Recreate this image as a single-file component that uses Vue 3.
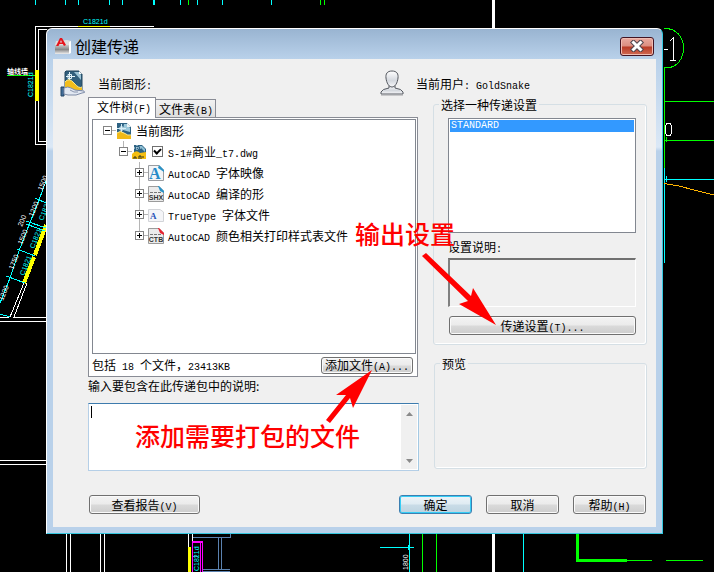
<script setup>
import { h, ref } from 'vue';

// Latin runs are set in a narrower mono face than the Chinese text
const Mixed = ({ t }) => h(
    'span',
    { class: 'mixed' },
    t.split(/([\x20-\x7e]+)/).filter(Boolean).map((run) =>
        /^[\x20-\x7e]/.test(run) ? h('span', { class: 'en' }, run) : run
    )
);
Mixed.props = ['t'];

const included = ref(true);
const note = ref('');
const setup = ref('STANDARD');

const fileTypes = ref([
    { id: 1, kind: 'font', name: 'AutoCAD 字体映像' },
    { id: 2, kind: 'shx', name: 'AutoCAD 编译的形' },
    { id: 3, kind: 'ttf', name: 'TrueType 字体文件' },
    { id: 4, kind: 'ctb', name: 'AutoCAD 颜色相关打印样式表文件' },
]);

const cyanTicks = [35, 65, 78, 109, 122, 153, 154, 180, 197, 222, 271];
const greenTicks = [188, 320, 324];
</script>

<template>
    <div class="desktop">
        <svg class="drawing" viewBox="0 0 714 572" preserveAspectRatio="xMinYMin slice" shape-rendering="crispEdges" aria-hidden="true">
            <rect v-for="x in cyanTicks" :key="x" :x="x" y="0" width="1" height="5" fill="#0ff" />
            <rect v-for="x in greenTicks" :key="x" :x="x" y="0" width="1" height="5" fill="#0f0" />
            <g fill="none" stroke="#fff">
                <path d="M154 26.5H35.5V144.5H46M47 29.5H38.5V141.5H46" />
                <path d="M0 317.5H9M13 317.5H46M0 321.5H46M0 460.5H46M0 464.5H46" />
                <path d="M24 283L10 317M27 283L14 317M35 257L24 283" />
                <path d="M66.5 534V572M70.5 534V572M100.5 534V572M104.5 534V572M188.5 534V547M192.5 534V541" />
                <path d="M493.5 0V28M493.5 534V572" stroke-width="3" />
                <path d="M664 49.5H668M670 41L673.5 38V60M670 60H676" />
                <path d="M667 123.500H670L671.500 126V133L670 135.500H667L665.500 133V126Z" />
            </g>
            <g fill="none" stroke="#ff0">
                <path d="M78 26.5H110" />
                <path d="M37 70V101" stroke-width="4" />
                <path d="M46 225L35 255M34 257L24 283" stroke-width="4" />
                <path d="M189.500 547V572" stroke-width="3" />
            </g>
            <g fill="none" stroke="#0ff">
                <path d="M46 181L39 200L29 225L19 251L10 278L0 303" />
                <path d="M35 198L46 203M26 221L46 228M26 224L45 231M17 249L35 256M6 276L25 283M0 314L10 317" />
                <path d="M664.5 168V263M664 179.500H714M666 176V182M523.5 534V572M409.5 534V572M380 547.500H414" />
                <path d="M409 545V550" stroke-width="2" />
            </g>
            <g fill="none" stroke="#0f0">
                <path d="M7 75.5H35M664.5 67V168M664 101.500H714M664 140.500H714M666 137V142" />
                <path d="M664 28.5C676 28 683.500 37 683.500 48S677 66 670 67.500H664" />
                <path d="M422.5 534V572M436.5 534V572M627 560.500H652M666 560.500H703" />
                <path d="M577.500 534V560.500H627" stroke-width="3" />
            </g>
            <path d="M664 183.500L679 186L694 190L714 195" fill="none" stroke="#ffb400" />
            <path d="M193 537.500H230.500M193 556H198M218.500 537V570M221.500 537V570M202 569.500H230M202 571.500H230M230.500 534V538" fill="none" stroke="#5b82b0" />
            <path d="M192.500 572V541.500H202.500V572M200.500 543V572M192 542.500H203" fill="none" stroke="#f0f" />
            <g class="cad-text" fill="#0ff">
                <text x="83" y="24">C1821d</text>
                <text transform="translate(33 97) rotate(-90)">C1821d</text>
                <text transform="translate(43 221) rotate(-68)">C1821</text>
                <text transform="translate(34 249) rotate(-68)">C1821</text>
                <text transform="translate(24 276) rotate(-68)">C1821</text>
                <text transform="translate(199 571) rotate(-90)">C1821d</text>
            </g>
            <g class="cad-text" fill="#fff">
                <text class="cad-bold" x="7" y="74">轴线墙</text>
                <text transform="translate(42 191) rotate(-68)">1500</text>
                <text transform="translate(33 217) rotate(-68)">1200</text>
                <text transform="translate(22 227) rotate(-68)">200</text>
                <text transform="translate(22 245) rotate(-68)">1500</text>
                <text transform="translate(13 270) rotate(-68)">1750</text>
                <text transform="translate(3 301) rotate(-68)">1200</text>
                <text transform="translate(408 570) rotate(-90)">1800</text>
            </g>
        </svg>

        <section class="dialog" role="dialog" aria-labelledby="dialog-title">
            <header class="titlebar">
                <svg class="app-icon" width="18" height="18" viewBox="0 0 18 18" aria-hidden="true">
                    <defs>
                        <linearGradient id="steel" x1="0" y1="0" x2="0" y2="1">
                            <stop offset="0" stop-color="#c9c9c9" />
                            <stop offset=".5" stop-color="#888" />
                            <stop offset="1" stop-color="#eee" />
                        </linearGradient>
                    </defs>
                    <path d="M2 4L13 3L17 4V16H1V8Z" fill="#ddd" />
                    <rect x="1" y="8" width="14" height="9" fill="url(#steel)" />
                    <path d="M15 5L17 4V16L15 17Z" fill="#fff" />
                    <path d="M2 9L6 1H8L12 8L10 9L8.800 7H5.500L4.500 9ZM6 5.500H8L7 3Z" fill="#e6151c" fill-rule="evenodd" />
                </svg>
                <h1 id="dialog-title">创建传递</h1>
                <button class="close" type="button" aria-label="关闭">
                    <svg width="14" height="12" viewBox="0 0 14 12" aria-hidden="true">
                        <path d="M3.500 2.500L10.500 9.500M10.500 2.500L3.500 9.500" stroke="#50454e" stroke-width="5" stroke-linecap="square" />
                        <path d="M3.500 2.500L10.500 9.500M10.500 2.500L3.500 9.500" stroke="#fff" stroke-width="3" stroke-linecap="square" />
                    </svg>
                </button>
            </header>

            <div class="client">
                <div class="summary">
                    <svg width="26" height="27" viewBox="0 0 26 27" aria-hidden="true">
                        <path d="M6 1H19L22 4V20H5V2Z" fill="#315f7c" stroke="#22475f" />
                        <path d="M14 2H19L21 5V10Z" fill="#9cc4d6" />
                        <path d="M19 1V4H22Z" fill="#fff" />
                        <path d="M9.500 2V11M6 6.500H15M8 4.500H11.500V8.500H8Z" fill="none" stroke="#e4f4fa" />
                        <path d="M5 12Q9 7 14 13T22 17V20H5Z" fill="#f3bd1b" />
                        <path d="M5 12Q9 7 14 13T22 17" fill="none" stroke="#ffec8c" />
                        <path d="M1 17H4V26H1Z" fill="#416d99" stroke="#244766" />
                        <path d="M4 18Q8 16 11 18L15 20L24 21Q26 23 22 23L16 25H8L4 24Z" fill="#e2e8f2" stroke="#7f8ca6" />
                        <path d="M10 20L14 22H18" fill="none" stroke="#8a96af" />
                    </svg>
                    <Mixed t="当前图形:" />
                    <div class="user">
                        <svg width="24" height="27" viewBox="0 0 24 27" aria-hidden="true">
                            <defs>
                                <linearGradient id="skin" x1="0" y1="0" x2="0" y2="1">
                                    <stop offset="0" stop-color="#fff" />
                                    <stop offset=".6" stop-color="#d4d8de" />
                                    <stop offset="1" stop-color="#f8f8fa" />
                                </linearGradient>
                            </defs>
                            <path d="M9 15V18Q2 19 1 22V24H23V22Q22 19 15 18V15" fill="url(#skin)" stroke="#555960" />
                            <path d="M12 1C7 1 5.500 4 6 8C6.500 13 9 17 12 17S17.500 13 18 8C18.500 4 17 1 12 1Z" fill="url(#skin)" stroke="#555960" />
                            <path d="M1 25.500H23" stroke="#c8c8ca" />
                        </svg>
                        <Mixed t="当前用户: GoldSnake" />
                    </div>
                </div>

                <main class="columns">
                    <div class="left">
                        <div class="tabs" role="tablist">
                            <button class="tab active" type="button" role="tab" aria-selected="true"><Mixed t="文件树(F)" /></button>
                            <button class="tab" type="button" role="tab" aria-selected="false"><Mixed t="文件表(B)" /></button>
                        </div>
                        <div class="panel">
                            <div class="tree">
                                <div class="row root">
                                    <button class="toggle open" type="button" aria-label="折叠"></button>
                                    <svg class="node-icon" width="16" height="16" viewBox="0 0 16 16" aria-hidden="true">
                                        <path d="M1 0H11L15 4V16H1Z" fill="#2d6283" />
                                        <path d="M8 1H11L14 5V9L7 7Z" fill="#9cc9db" />
                                        <path d="M11 0V4H15Z" fill="#e9f1f4" />
                                        <path d="M5.500 1V9M1 5.500H10M4 4H7V7H4Z" fill="none" stroke="#d7eef6" />
                                        <path d="M1 10Q4 7 8 10T15 12V16H1Z" fill="#f0b917" />
                                        <path d="M1 10Q4 7 8 10T15 12" fill="none" stroke="#ffec91" />
                                    </svg>
                                    <Mixed t="当前图形" />
                                </div>
                                <div class="row sheet">
                                    <button class="toggle open" type="button" aria-label="折叠"></button>
                                    <svg class="node-icon" width="16" height="16" viewBox="0 0 16 16" aria-hidden="true">
                                        <path d="M2 1H10L14 5V14H2Z" fill="#2d6283" />
                                        <path d="M7 2H10L13 5V8Z" fill="#8cbed3" />
                                        <path d="M2 4H9M5 1V7" stroke="#d7eef6" stroke-dasharray="1 1" />
                                        <path d="M0 10Q4 5 8 9L14 8V15H0Z" fill="#f5bf13" />
                                        <path d="M2 15V13H4V15M7 15V12H9V15M11 14V12" fill="none" stroke="#30311c" />
                                    </svg>
                                    <label class="pick">
                                        <input v-model="included" type="checkbox" />
                                        <Mixed t="S-1#商业_t7.dwg" />
                                    </label>
                                </div>
                                <div v-for="file in fileTypes" :key="file.id" class="row leaf">
                                    <button class="toggle" type="button" aria-label="展开"></button>
                                    <svg class="node-icon" width="16" height="16" viewBox="0 0 16 16" aria-hidden="true">
                                        <template v-if="file.kind === 'font'">
                                            <path d="M.5 .5H11L15.500 5V15.500H.5Z" fill="#f3f5f7" stroke="#9a9da1" />
                                            <path d="M11 0L16 5V7L10 3Z" fill="#2b92c6" />
                                            <text x="1" y="14" class="letter-a">A</text>
                                        </template>
                                        <template v-else-if="file.kind === 'ttf'">
                                            <path d="M.5 2.500H12L15.500 5V14.500H.5Z" fill="#f4f5f8" stroke="#d2d4d8" />
                                            <text x="2" y="12" class="letter-t">A</text>
                                        </template>
                                        <template v-else>
                                            <path d="M.5 .5H11L15.500 5V15.500H.5Z" fill="#ebebeb" stroke="#9b9b9b" />
                                            <path d="M10 0H11L16 5V7L12 5Z" :fill="file.kind === 'shx' ? '#2b92c6' : '#e72330'" />
                                            <path d="M2 6.500H14" stroke="#777" stroke-dasharray="3 1" />
                                            <text x="8" y="14" class="letters" text-anchor="middle">{{ file.kind.toUpperCase() }}</text>
                                        </template>
                                    </svg>
                                    <Mixed :t="file.name" />
                                </div>
                            </div>
                            <div class="panel-foot">
                                <Mixed t="包括 18 个文件，23413KB" />
                                <button class="btn add" type="button"><Mixed t="添加文件(A)..." /></button>
                            </div>
                        </div>
                        <label class="note-label" for="note">输入要包含在此传递包中的说明:</label>
                        <div class="note">
                            <textarea id="note" v-model="note"></textarea>
                            <i class="caret"></i>
                            <div class="scroll">
                                <button type="button" aria-label="向上滚动"><svg width="7" height="4" viewBox="0 0 7 4"><path d="M3.500 0L7 4H0Z" fill="#8a8a8a" /></svg></button>
                                <button type="button" aria-label="向下滚动"><svg width="7" height="4" viewBox="0 0 7 4"><path d="M0 0H7L3.500 4Z" fill="#8a8a8a" /></svg></button>
                            </div>
                        </div>
                    </div>

                    <div class="right">
                        <fieldset class="group setups">
                            <legend>选择一种传递设置</legend>
                            <select v-model="setup" class="listbox" size="5" aria-label="传递设置">
                                <option value="STANDARD">STANDARD</option>
                            </select>
                            <label class="desc-label" for="desc"><Mixed t="设置说明:" /></label>
                            <textarea id="desc" class="desc" readonly></textarea>
                            <button class="btn" type="button"><Mixed t="传递设置(T)..." /></button>
                        </fieldset>
                        <fieldset class="group preview">
                            <legend>预览</legend>
                        </fieldset>
                    </div>
                </main>

                <footer class="actions">
                    <button class="btn report" type="button"><Mixed t="查看报告(V)" /></button>
                    <button class="btn primary" type="button">确定</button>
                    <button class="btn" type="button">取消</button>
                    <button class="btn" type="button"><Mixed t="帮助(H)" /></button>
                </footer>
            </div>
        </section>

        <svg class="arrows" width="714" height="572" viewBox="0 0 714 572" aria-hidden="true">
            <path d="M422 256L426 253L471 296L473 288L496 325L459 304L468 301Z" />
            <path d="M326 420L346 395L336 395L372 370L353 408L350 398L330 423Z" />
        </svg>
        <strong class="remark output">输出设置</strong>
        <strong class="remark pack">添加需要打包的文件</strong>
    </div>
</template>

<style>
body {
    margin: 0;
    background: #000;
}

.mixed {
    white-space: pre;
}

.mixed .en {
    font-family: "Liberation Mono", monospace;
    font-size: 10px;
    line-height: 10px;
}
</style>

<style scoped>
.desktop {
    position: relative;
    display: flex;
    box-sizing: border-box;
    min-height: 100vh;
    padding: 28px 51px 38px 46px;
    overflow: hidden;
    background: #000;
    color: #000;
    font-family: "Noto Sans CJK SC", sans-serif;
    font-size: 12px;
    line-height: 16px;
}

.desktop button,
.desktop textarea {
    box-sizing: border-box;
    margin: 0;
    color: inherit;
    font: inherit;
}

.drawing {
    position: absolute;
    top: 0;
    left: 0;
    width: 100%;
    height: 100%;
}

.cad-text {
    font-family: "Liberation Sans", "Noto Sans CJK SC", sans-serif;
    font-size: 7px;
}

.cad-bold {
    font-weight: bold;
}

.dialog {
    position: relative;
    display: flex;
    flex: 1;
    flex-direction: column;
    min-width: 0;
    padding: 0 6px 6px;
    border: 1px solid #35c8e0;
    border-top-color: #fff;
    border-left-color: #fff;
    border-radius: 6px 6px 0 0;
    background: linear-gradient(#99b4d1, #b9d1ea 30px, #dbe8f6 118px, #b9d1ea 122px);
}

.titlebar {
    display: flex;
    align-items: center;
    height: 30px;
    padding: 4px 2px 0 1px;
    box-sizing: border-box;
}

h1 {
    flex: 1;
    margin: 0 0 0 3px;
    font-size: 16px;
    font-weight: 400;
    line-height: 20px;
}

.close {
    display: flex;
    align-items: center;
    justify-content: center;
    width: 34px;
    height: 19px;
    padding: 0;
    border: 1px solid #431422;
    border-radius: 3px;
    background: linear-gradient(#e9aaa0, #dc8e80 48%, #b93a25 52%, #cf6a52);
    box-shadow: inset 0 0 0 1px #f0bcb2;
}

.client {
    display: flex;
    flex: 1;
    flex-direction: column;
    padding-bottom: 13px;
    background: #f0f0f0;
}

.summary {
    display: flex;
    align-items: center;
    gap: 12px;
    height: 27px;
    padding: 11px 0 0 7px;
}

.user {
    display: flex;
    align-items: center;
    gap: 12px;
    width: 276px;
    margin-left: auto;
}

.columns {
    display: grid;
    flex: 1;
    grid-template-columns: minmax(0, 1fr) 214px;
    gap: 14px;
    padding: 0 9px 0 35px;
}

.left,
.right {
    display: flex;
    flex-direction: column;
    min-width: 0;
}

.tabs {
    display: flex;
    align-items: flex-end;
    height: 20px;
}

.tab {
    height: 18px;
    padding: 0 2px 0 3px;
    border: 1px solid #898c95;
    border-bottom: 0;
    border-left: 0;
    background: linear-gradient(#f2f2f2, #dedede);
    line-height: 16px;
}

.desktop .tab.active {
    position: relative;
    z-index: 1;
    height: 21px;
    margin-bottom: -1px;
    padding: 0 4px 2px 8px;
    border-left: 1px solid #898c95;
    background: #fff;
}

.panel {
    display: flex;
    flex: 1;
    flex-direction: column;
    margin-right: 1px;
    padding: 1px 1px 0 3px;
    border: 1px solid #898c95;
    background: #fff;
}

.tree {
    flex: 1;
    border: 1px solid #828790;
}

.row {
    position: relative;
    display: flex;
    align-items: center;
    height: 21px;
}

.root {
    padding-left: 10px;
}

.sheet {
    padding-left: 26px;
}

.leaf {
    padding-left: 42px;
}

/* vertical branch lines */
.sheet::before,
.leaf::before {
    position: absolute;
    top: 0;
    width: 1px;
    height: 21px;
    background: #b5b5b5;
    content: "";
}

.sheet::before {
    left: 30px;
    height: 10px;
}

.leaf::before {
    left: 46px;
}

.leaf:last-child::before {
    height: 10px;
}

.toggle {
    position: relative;
    flex: none;
    width: 9px;
    height: 9px;
    padding: 0;
    border: 1px solid #848484;
    background:
        linear-gradient(#000, #000) center / 5px 1px no-repeat,
        linear-gradient(#000, #000) center / 1px 5px no-repeat,
        #fff;
}

.toggle.open {
    background: linear-gradient(#000, #000) center / 5px 1px no-repeat, #fff;
}

.toggle::after {
    position: absolute;
    top: 3px;
    left: 8px;
    width: 4px;
    height: 1px;
    background: #b5b5b5;
    content: "";
}

.node-icon {
    flex: none;
    margin: 0 4px;
}

.letter-a {
    fill: #278bc9;
    font: bold 16px "Liberation Serif", serif;
}

.letter-t {
    fill: #2753b9;
    font: bold 9px "Liberation Serif", serif;
}

.letters {
    fill: #333;
    font: bold 7px "Liberation Sans", sans-serif;
}

.pick {
    display: flex;
    align-items: center;
    gap: 5px;
}

.pick input {
    display: grid;
    place-items: center;
    width: 11px;
    height: 11px;
    margin: 0;
    border: 1px solid #707070;
    background: #fff;
    appearance: none;
}

.pick input:checked::after {
    width: 5px;
    height: 3px;
    margin-bottom: 2px;
    border: solid #000;
    border-width: 0 0 2px 2px;
    transform: rotate(-45deg);
    content: "";
}

.panel-foot {
    display: flex;
    align-items: center;
    justify-content: space-between;
    height: 22px;
    padding-right: 3px;
}

.btn {
    height: 19px;
    padding: 0;
    border: 1px solid #707070;
    border-radius: 3px;
    background: linear-gradient(#f3f3f3, #ebebeb 48%, #dadada 52%, #cdcdcd);
    box-shadow: inset 0 0 0 1px #fafafa;
}

.desktop .btn {
    line-height: 16px;
}

.desktop .add {
    width: 92px;
    height: 17px;
    line-height: 14px;
}

.note-label {
    margin: 1px 0 9px;
}

.note {
    position: relative;
    display: flex;
    height: 68px;
    box-sizing: border-box;
    border: 1px solid #b5cfe7;
    border-top-color: #3d7bad;
    border-right-color: #a4c9e3;
    background: #fff;
}

.note textarea {
    flex: 1;
    min-width: 0;
    padding: 2px;
    border: 0;
    outline: 0;
    background: transparent;
    resize: none;
}

.caret {
    position: absolute;
    top: 2px;
    left: 2px;
    width: 1px;
    height: 12px;
    background: #000;
}

.scroll {
    display: flex;
    flex-direction: column;
    justify-content: space-between;
    width: 16px;
    margin: 1px;
    background: #f0f0f0;
}

.scroll button {
    display: flex;
    align-items: center;
    justify-content: center;
    height: 17px;
    padding: 0;
    border: 0;
    background: transparent;
}

.group {
    display: flex;
    flex-direction: column;
    min-width: 0;
    margin: 0;
    border: 1px solid #d5dfe5;
    border-radius: 3px;
    box-shadow: inset -1px -1px #fff;
}

.group legend {
    padding: 0 2px;
    line-height: 15px;
}

.setups {
    flex: 1;
    padding: 6px 10px 9px 14px;
}

.setups legend {
    margin-left: -9px;
}

.preview {
    height: 113px;
    box-sizing: border-box;
    margin: 11px 0 2px 1px;
    padding: 0 5px;
}

.listbox {
    flex: 1;
    min-height: 113px;
    box-sizing: border-box;
    padding: 1px;
    overflow: hidden;
    border: 1px solid #828790;
    border-radius: 0;
    outline: 0;
    background: #fff;
    font-family: "Liberation Mono", monospace;
    font-size: 10px;
}

.listbox option {
    min-height: 12px;
    padding: 0 1px;
    line-height: 12px;
}

.listbox option:checked {
    background: linear-gradient(#39f, #39f);
    -webkit-text-fill-color: #fff;
}

.desc-label {
    height: 16px;
    margin: 6px 0 3px;
}

.desc {
    height: 49px;
    margin: 0;
    border: 1px solid #fff;
    border-top: 2px solid #707070;
    border-left: 2px solid #808080;
    outline: 0;
    background: #f0f0f0;
    resize: none;
}

.desktop .setups .btn {
    margin: 9px 0 0 1px;
}

.actions {
    display: flex;
    gap: 14px;
    margin-top: 24px;
    padding: 0 10px 0 36px;
}

.actions .btn {
    width: 73px;
}

.desktop .actions .report {
    width: 111px;
    margin-right: auto;
}

.primary {
    border-color: #3c7fb1;
    background: linear-gradient(#edf4f8, #dfebf2 48%, #c9dce7 52%, #bdd3e0);
    box-shadow: inset 0 0 0 1px #35cdf5;
}

.arrows {
    position: absolute;
    top: 0;
    left: 0;
    fill: #f00;
    pointer-events: none;
}

.remark {
    position: absolute;
    color: #f00;
    font-size: 25px;
    font-weight: 500;
    line-height: 30px;
    pointer-events: none;
}

.output {
    top: 218px;
    left: 355px;
}

.pack {
    top: 420px;
    left: 135px;
}
</style>
